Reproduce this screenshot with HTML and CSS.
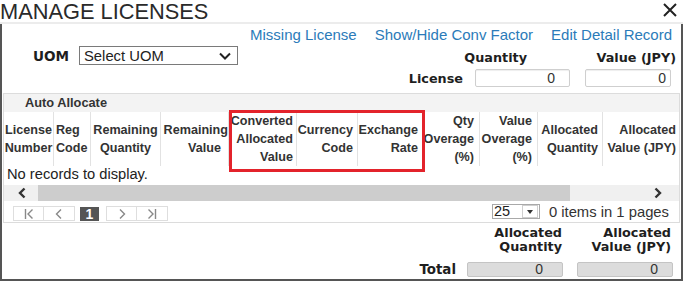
FILE: index.html
```html
<!DOCTYPE html>
<html>
<head>
<meta charset="utf-8">
<link rel="stylesheet" href="styles.css">
</head>
<body>
<div class="titlebar">
  <h1 class="title">MANAGE LICENSES</h1>
  <svg class="close" width="14" height="14" viewBox="0 0 14 14"><path d="M1 1 L13 13 M13 1 L1 13" stroke="#222" stroke-width="2" fill="none"/></svg>
</div>
<div class="dialog">
  <div class="links">
    <a class="link">Missing License</a>
    <a class="link">Show/Hide Conv Factor</a>
    <a class="link">Edit Detail Record</a>
  </div>
  <div class="uom-row">
    <span class="uom-label">UOM</span>
    <div class="select">
      <span>Select UOM</span>
      <svg width="12" height="8" viewBox="0 0 12 8"><path d="M1 1.5 L6 6.5 L11 1.5" stroke="#222" stroke-width="2" fill="none"/></svg>
    </div>
    <span class="spacer"></span>
    <span class="lbl qty-head">Quantity</span>
    <span class="lbl val-head">Value (JPY)</span>
  </div>
  <div class="license-row">
    <span class="lbl">License</span>
    <div class="num-input qty-in">0</div>
    <div class="num-input val-in">0</div>
  </div>

  <div class="grid-box">
    <div class="toolbar">Auto Allocate</div>
    <div class="thead">
      <div class="th c-center">License<br>Number</div>
      <div class="th c-left">Reg<br>Code</div>
      <div class="th c-center">Remaining<br>Quantity</div>
      <div class="th c-right">Remaining<br><span class="pad-val">Value</span></div>
      <div class="th c-right p3">Converted<br>Allocated<br>Value</div>
      <div class="th c-right p4">Currency<br>Code</div>
      <div class="th c-right p4">Exchange<br>Rate</div>
      <div class="th c-right p5">Qty<br>Overage<br>(%)</div>
      <div class="th c-right p5">Value<br>Overage<br>(%)</div>
      <div class="th c-right p4">Allocated<br>Quantity</div>
      <div class="th c-right p1 last">Allocated<br>Value (JPY)</div>
    </div>
    <div class="empty">No records to display.</div>
    <div class="hscroll">
      <div class="sb-btn left">
        <svg width="10" height="12" viewBox="0 0 10 12"><path d="M7.5 1.5 L3 6 L7.5 10.5" stroke="#333" stroke-width="2.4" fill="none"/></svg>
      </div>
      <div class="sb-thumb"></div>
      <div class="sb-track">
        <svg width="10" height="12" viewBox="0 0 10 12"><path d="M2.5 1.5 L7 6 L2.5 10.5" stroke="#333" stroke-width="2.4" fill="none"/></svg>
      </div>
    </div>
    <div class="pager">
      <div class="pg-group">
        <div class="pg-btn"><svg width="12" height="12" viewBox="0 0 12 12"><path d="M2.5 1 V11 M9.5 1.5 L5 6 L9.5 10.5" stroke="#888" stroke-width="1.4" fill="none"/></svg></div>
        <div class="pg-btn"><svg width="12" height="12" viewBox="0 0 12 12"><path d="M8 1.5 L3.5 6 L8 10.5" stroke="#888" stroke-width="1.4" fill="none"/></svg></div>
      </div>
      <div class="pg-current">1</div>
      <div class="pg-group">
        <div class="pg-btn"><svg width="12" height="12" viewBox="0 0 12 12"><path d="M4 1.5 L8.5 6 L4 10.5" stroke="#888" stroke-width="1.4" fill="none"/></svg></div>
        <div class="pg-btn"><svg width="12" height="12" viewBox="0 0 12 12"><path d="M2.5 1.5 L7 6 L2.5 10.5 M9.5 1 V11" stroke="#888" stroke-width="1.4" fill="none"/></svg></div>
      </div>
      <span class="spacer"></span>
      <div class="page-size">
        <span class="ps-val">25</span>
        <span class="ps-btn"><svg width="6" height="4" viewBox="0 0 6 4"><path d="M0 0 H6 L3 4 Z" fill="#333"/></svg></span>
      </div>
      <span class="pg-info">0 items in 1 pages</span>
    </div>
    <div class="highlight"></div>
  </div>

  <div class="totals-head">
    <span class="lbl t-qty">Allocated<br>Quantity</span>
    <span class="lbl t-val">Allocated<br>Value (JPY)</span>
  </div>
  <div class="totals-row">
    <span class="lbl total-lbl">Total</span>
    <div class="ro-input ro-qty">0</div>
    <div class="ro-input ro-val">0</div>
  </div>
</div>
</body>
</html>
```

FILE: styles.css
```css
* { box-sizing: border-box; }
html, body {
  margin: 0;
  padding: 0;
  width: 683px;
  height: 281px;
  overflow: hidden;
  background: #fff;
  font-family: "Liberation Sans", Arial, sans-serif;
  color: #222;
}

.titlebar {
  height: 24px;
  display: flex;
  justify-content: space-between;
  align-items: flex-start;
  border-bottom: 2px solid #ececec;
}
.title {
  margin: 0 0 -2px 0;
  font-weight: normal;
  font-size: 21.8px;
  line-height: 24px;
  color: #2a2a2a;
  letter-spacing: 0;
}
.close {
  margin-top: 3px;
  margin-right: 6px;
}

.dialog {
  height: 257px;
  border-left: 2px solid #555;
  border-right: 2px solid #555;
  border-bottom: 2px solid #555;
  overflow: hidden;
}

.links {
  display: flex;
  justify-content: flex-end;
  gap: 18px;
  padding-top: 1px;
  padding-right: 9px;
  height: 19px;
  align-items: center;
}
.link {
  font-size: 15px;
  color: #2b7bb9;
  line-height: 17px;
}

.lbl {
  font-family: "DejaVu Sans", sans-serif;
  font-weight: bold;
  font-size: 12.8px;
  color: #1e1e1e;
}

.uom-row {
  display: flex;
  align-items: center;
  margin-top: 3px;
  height: 19px;
}
.uom-label {
  font-family: "DejaVu Sans", sans-serif;
  font-weight: bold;
  font-size: 13.6px;
  color: #1e1e1e;
  margin-left: 31px;
  width: 46px;
}
.select {
  width: 159px;
  height: 19px;
  border: 1px solid #7a7a7a;
  display: flex;
  align-items: center;
  justify-content: space-between;
  padding: 0 6px 0 4px;
  font-size: 14.8px;
  color: #222;
}
.spacer { flex: 1; }
.qty-head {
  width: 80px;
  text-align: right;
  margin-right: 49px;
  margin-top: 4px;
}
.val-head {
  width: 100px;
  text-align: right;
  margin-right: 5px;
  margin-top: 4px;
}

.license-row {
  display: flex;
  justify-content: flex-end;
  align-items: center;
  margin-top: 4px;
  height: 18px;
}
.license-row .lbl { margin-right: 12px; }
.num-input {
  height: 18px;
  border: 1px solid #cfcfcf;
  border-radius: 2px;
  box-shadow: inset 0 1px 1px #eee;
  font-size: 14px;
  line-height: 16px;
  text-align: right;
  color: #333;
}
.qty-in { width: 95px; padding-right: 14px; margin-right: 15px; }
.val-in { width: 86px; padding-right: 4px; margin-right: 10px; }

.grid-box {
  position: relative;
  margin: 6px 1px 0 1px;
  border: 1px solid #dcdcdc;
}
.toolbar {
  height: 18px;
  background: #f3f3f3;
  font-weight: bold;
  font-size: 12.8px;
  line-height: 18px;
  color: #333;
  padding-left: 21px;
}
.thead {
  display: grid;
  grid-template-columns: 50px 37px 70px 68px 68px 61px 65px 57px 58px 65px 74px;
  height: 54px;
}
.th {
  font-weight: bold;
  font-size: 12.6px;
  line-height: 18px;
  color: #333;
  white-space: nowrap;
  border-right: 1px solid #e2e2e2;
  display: flex;
  flex-direction: column;
  justify-content: center;
}
.th.last { border-right: none; }
.c-center { text-align: center; }
.c-left { text-align: left; padding-left: 2px; }
.c-right { text-align: right; }
.p1 { padding-right: 1px; }
.p3 { padding-right: 3px; }
.p4 { padding-right: 4px; }
.p5 { padding-right: 5px; }
.pad-val { padding-right: 7px; }

.empty {
  height: 19px;
  font-size: 14.7px;
  line-height: 17px;
  padding-left: 3px;
  color: #222;
}

.hscroll {
  display: flex;
  height: 16px;
}
.sb-btn {
  width: 34px;
  background: #f0f0f0;
  display: flex;
  align-items: center;
  justify-content: center;
  padding-left: 2px;
}
.sb-thumb {
  width: 532px;
  background: #cdcdcd;
}
.sb-track {
  flex: 1;
  background: #f0f0f0;
  display: flex;
  align-items: center;
  justify-content: flex-end;
  padding-right: 16px;
}

.pager {
  display: flex;
  align-items: center;
  height: 21px;
  padding-left: 9px;
}
.pg-group { display: flex; }
.pg-btn {
  width: 31px;
  height: 15px;
  border: 1px solid #dedede;
  display: flex;
  align-items: center;
  justify-content: center;
  margin-top: 4px;
}
.pg-btn + .pg-btn { border-left: none; }
.pg-current {
  width: 19px;
  height: 14px;
  background: #555;
  color: #fff;
  font-size: 14px;
  font-weight: bold;
  line-height: 14px;
  text-align: center;
  margin: 4px 7px 0 5px;
}
.page-size {
  display: flex;
  align-items: center;
  width: 48px;
  height: 15px;
  border: 1px solid #a9a9a9;
  margin-right: 9px;
}
.ps-val {
  flex: 1;
  font-size: 14.5px;
  line-height: 13px;
  color: #222;
  padding-left: 1px;
}
.ps-btn {
  width: 16px;
  height: 13px;
  border: 1px solid #cfcfcf;
  display: flex;
  align-items: center;
  justify-content: center;
  margin-right: 1px;
}
.pg-info {
  font-size: 14.8px;
  color: #333;
  margin-right: 10px;
}

.highlight {
  position: absolute;
  left: 225px;
  top: 16px;
  width: 196px;
  height: 62px;
  border: 3px solid #e3232b;
}

.totals-head {
  display: flex;
  justify-content: flex-end;
  margin-top: 3px;
  line-height: 14px;
}
.t-qty { width: 100px; text-align: right; margin-right: 9px; }
.t-val { width: 100px; text-align: right; margin-right: 10px; }

.totals-row {
  display: flex;
  justify-content: flex-end;
  align-items: center;
  margin-top: 8px;
  height: 15px;
}
.total-lbl { font-size: 13.4px; }
.totals-row .lbl { margin-right: 11px; }
.ro-input {
  width: 96px;
  height: 15px;
  background: #dcdcdc;
  border: 1px solid #c4c4c4;
  border-radius: 2px;
  font-size: 14px;
  line-height: 13px;
  text-align: right;
  color: #333;
}
.ro-qty { padding-right: 19px; margin-right: 14px; }
.ro-val { padding-right: 14px; margin-right: 8px; }
```
